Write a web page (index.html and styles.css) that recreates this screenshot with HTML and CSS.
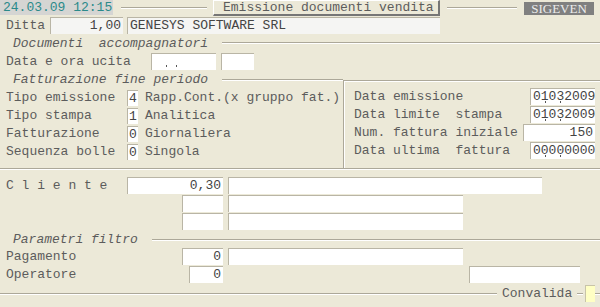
FILE: index.html
```html
<!DOCTYPE html>
<html lang="it">
<head>
  <meta charset="UTF-8" />
  <title>Emissione documenti vendita</title>
  <link rel="stylesheet" href="styles.css">
</head>
<body>
  <div class="screen">
    <div class="top">
      <div class="clock">24.03.09 12:15</div>
      <div class="rule rule-a"></div>
      <div class="title">Emissione documenti vendita</div>
      <div class="rule rule-b"></div>
      <div class="prog">SIGEVEN</div>
    </div>

    <div class="row">
      <span class="lbl w-ditta">Ditta</span>
      <span class="fld dim r w-ditta-code">1,00</span>
      <span class="fld dim w-ditta-name">GENESYS SOFTWARE SRL</span>
    </div>

    <!-- Documenti accompagnatori -->
    <div class="sect">
      <span class="cap">Documenti  accompagnatori</span>
      <div class="rule"></div>
    </div>
    <div class="row row-gap">
      <span class="lbl w-data">Data e ora ucita</span>
      <span class="fld dots w-date"><i></i><i></i></span>
      <span class="fld w-time"></span>
    </div>

    <!-- Fatturazione fine periodo -->
    <div class="fatt">
      <div class="fatt-left">
        <div class="sect">
          <span class="cap">Fatturazione fine periodo</span>
          <div class="rule"></div>
        </div>
        <div class="opt"><span class="lbl w-opt">Tipo emissione</span><span class="fld digit">4</span><span class="desc">Rapp.Cont.(x gruppo fat.)</span></div>
        <div class="opt"><span class="lbl w-opt">Tipo stampa</span><span class="fld digit">1</span><span class="desc">Analitica</span></div>
        <div class="opt"><span class="lbl w-opt">Fatturazione</span><span class="fld digit">0</span><span class="desc">Giornaliera</span></div>
        <div class="opt"><span class="lbl w-opt">Sequenza bolle</span><span class="fld digit">0</span><span class="desc">Singola</span></div>
      </div>
      <div class="fatt-right">
        <div class="line"><span>Data emissione</span><span class="fld w-dt">01<i></i>03<i></i>2009</span></div>
        <div class="line"><span>Data limite  stampa</span><span class="fld w-dt">01<i></i>03<i></i>2009</span></div>
        <div class="line"><span>Num. fattura iniziale</span><span class="fld r w-nf">150</span></div>
        <div class="line"><span>Data ultima  fattura</span><span class="fld w-dt">00<i></i>00<i></i>0000</span></div>
      </div>
    </div>

    <!-- Cliente -->
    <div class="cliente">
      <div class="row row-18">
        <span class="lbl w-cli">C l i e n t e</span>
        <span class="fld r w-cli-code">0,30</span>
        <span class="fld w-cli-name"></span>
      </div>
      <div class="row row-18">
        <span class="fld w-small push-182"></span>
        <span class="fld w-mid"></span>
      </div>
      <div class="row row-18">
        <span class="fld w-small push-182"></span>
        <span class="fld w-mid"></span>
      </div>
    </div>

    <!-- Parametri filtro -->
    <div class="sect sect-filtro">
      <span class="cap">Parametri filtro</span>
      <div class="rule"></div>
    </div>
    <div class="row row-18">
      <span class="lbl w-par">Pagamento</span>
      <span class="fld r w-small">0</span>
      <span class="fld w-mid"></span>
    </div>
    <div class="row row-18">
      <span class="lbl w-par-op">Operatore</span>
      <span class="fld r w-op">0</span>
      <span class="fld w-op-name"></span>
    </div>

    <div class="foot">
      <div class="rule rule-foot"></div>
      <span class="conv">Convalida</span>
      <div class="rule rule-dash"></div>
      <span class="confirm"></span>
      <div class="rule rule-end"></div>
    </div>
  </div>
</body>
</html>
```

FILE: styles.css
```css
:root {
  --bg:#ece9d8;
  --edge:#aca899;
  --text:#5c5c5c;
  --value:#444;
}
* {box-sizing:border-box;}
body {
  margin:0;
  background: var(--bg);
  color: var(--text);
  font: 13px/17px "Liberation Mono", "DejaVu Sans Mono", monospace;
}
.screen {width:600px; height:307px; overflow:hidden;}

/* top bar */
.top {display:flex; height:17px; align-items:flex-start;}
.clock {
  width:113px; height:15px;
  background:#d5d5d3;
  color:#2b8a8a;
  line-height:15px;
  padding-left:3px;
}
.rule {
  height:2px;
  border-top:1px solid var(--edge);
  border-bottom:1px solid #fff;
}
.top .rule {margin-top:7px;}
.rule-a {width:86px; margin-left:8px; margin-right:6px;}
.rule-b {width:70px; margin-left:7px; margin-right:7px;}
.title {
  width:227px; height:16px;
  border-top:1px solid #fff;
  border-left:1px solid #fff;
  border-right:2px solid #767676;
  border-bottom:2px solid #767676;
  padding-left:9px;
  line-height:13px;
  white-space:pre;
}
.prog {
  width:70px; height:13px;
  margin-top:2px;
  background:#808080;
  color:#ececec;
  font: 13px/13px "Liberation Serif", serif;
  text-align:center;
}

/* generic rows and fields */
.row {display:flex; height:17px; white-space:pre;}
.row-gap {margin-top:1px;}
.row-18 {height:18px;}
.lbl {padding-left:6px; white-space:pre; flex:none;}
.fld {
  display:block;
  flex:none;
  height:17px;
  background:#fff;
  border-top:1px solid #b9b5a5;
  border-left:1px solid #b9b5a5;
  line-height:16px;
  padding:0 2px 0 1px;
  color: var(--value);
  white-space:pre;
  overflow:hidden;
}
.fld.r {text-align:right;}
.fld.dim {background:#f5f5f3;}

/* date separators drawn as small dots under the digits */
.fld i {
  display:inline-block;
  position:relative;
  width:0; height:0;
}
.fld i::before {
  content:"";
  position:absolute;
  left:-4px; top:1px;
  width:1px; height:2px;
  background:#555;
}
.dots {padding-left:14px;}
.dots i {margin-right:10px;}
.dots i::before {left:0; top:0;}

.w-ditta {width:50px;}
.w-ditta-code {width:73px;}
.w-ditta-name {width:313px; margin-left:4px; padding-left:2px;}
.w-data {width:151px;}
.w-date {width:65px;}
.w-time {width:33px; margin-left:5px;}

/* section titles */
.sect {display:flex; align-items:center; height:18px;}
.sect .cap {
  font-style:italic;
  padding-left:13px;
  width:222px;
  flex:none;
  white-space:pre;
}
.sect .rule {flex:1;}
.sect-filtro {height:17px;}
.sect-filtro .cap {width:152px;}

/* fatturazione box */
.fatt {
  display:flex;
  height:99px;
  border-bottom:1px solid var(--edge);
  box-shadow:0 1px 0 #fff;
}
.fatt-left {width:343px; flex:none;}
.fatt-left .sect {height:19px;}
.opt {display:flex; height:18px; align-items:flex-start;}
.w-opt {width:127px;}
.fld.digit {
  width:11px; height:16px;
  padding:0;
  text-align:center;
  line-height:16px;
  margin-top:1px;
}
.desc {margin-left:7px; white-space:pre;}
.fatt-right {
  flex:1;
  margin-top:10px;
  border-top:1px solid var(--edge);
  border-left:1px solid var(--edge);
  box-shadow: inset 1px 1px 0 #fff;
  padding:7px 5px 0 10px;
}
.line {display:flex; justify-content:space-between; height:18px; white-space:pre;}
.w-dt {width:65px; padding-left:2px;}
.w-nf {width:72px;}

/* cliente */
.cliente {padding-top:8px;}
.w-cli {width:127px;}
.w-cli-code {width:96px;}
.w-cli-name {width:314px; margin-left:5px;}
.w-small {width:41px;}
.push-182 {margin-left:182px;}
.w-mid {width:235px; margin-left:5px;}
.w-par {width:182px;}
.w-par-op {width:189px;}
.w-op {width:34px;}
.w-op-name {width:111px; margin-left:246px;}

/* footer */
.foot {display:flex; align-items:center; height:17px; margin-top:1px;}
.rule-foot {width:497px; margin-right:5px;}
.conv {width:70px; white-space:pre;}
.rule-dash {width:6px; margin-left:5px; margin-right:2px;}
.confirm {
  width:10px; height:17px;
  background:#ffffc4;
  border-left:1px solid #c8c4a8;
  border-top:1px solid #c8c4a8;
}
.rule-end {flex:1;}
```
